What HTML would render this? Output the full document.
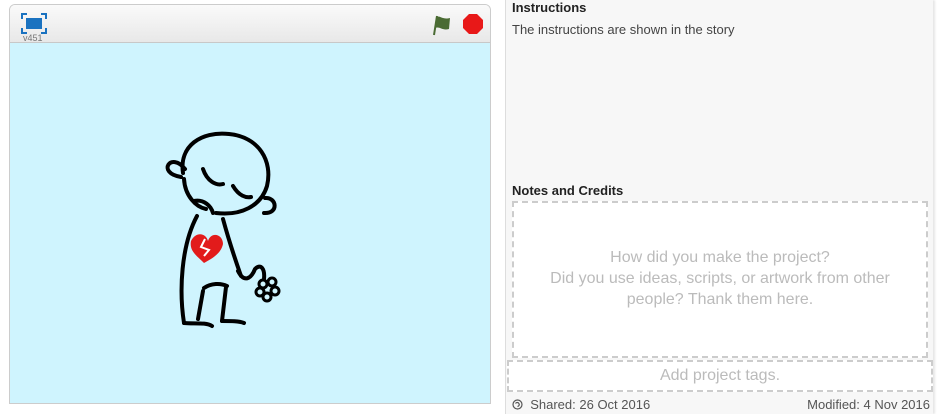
<!DOCTYPE html>
<html><head><meta charset="utf-8"><style>
*{margin:0;padding:0;box-sizing:border-box}
body{width:942px;height:414px;background:#fff;font-family:"Liberation Sans",Arial,sans-serif;position:relative;overflow:hidden}
#player{position:absolute;left:9px;top:4px;width:482px;height:400px;border:1px solid #ccc;border-radius:6px 6px 0 0;overflow:hidden}
#hdr{height:38px;background:linear-gradient(#fafafa,#e8e8e8);border-bottom:1px solid #c8c8c8;position:relative}
#stage{position:absolute;top:38px;left:0;right:0;bottom:0;background:#cff4fe}
#ver{position:absolute;left:13px;top:29px;font-size:9px;color:#777;line-height:9px}
#right{position:absolute;left:505px;top:0;width:428px;height:414px;background:#f7f7f7;border-left:1px solid #ddd;box-shadow:2px 0 2px #e6e6e6}
h3{position:absolute;left:6px;font-size:13px;font-weight:bold;color:#222}
.t{position:absolute;left:6px;top:22px;font-size:13px;color:#444}
#notes{position:absolute;left:6px;top:201px;width:416px;height:157px;background:#fff;border:2px dashed #ccc;text-align:center;color:#bbb;font-size:16px;line-height:21px;padding-top:44px}
#tags{position:absolute;left:1px;top:360px;width:426px;height:32px;background:#fff;border:2px dashed #ccc;text-align:center;color:#bbb;font-size:16px;line-height:28px}
#foot{position:absolute;left:6px;top:397px;width:418px;font-size:13px;color:#555}
</style></head><body>
<div id="player">
 <div id="hdr">
  <svg style="position:absolute;left:11px;top:8px" width="26" height="21" viewBox="0 0 26 21">
   <path d="M1 6V1H6M20 1H25V6M25 15V20H20M6 20H1V15" fill="none" stroke="#1a72c0" stroke-width="2"/>
   <rect x="5" y="5" width="16" height="11" fill="#1a72c0"/>
  </svg>
  <div id="ver">v451</div>
  <svg style="position:absolute;left:420px;top:9px" width="22" height="22" viewBox="0 0 22 22">
   <path d="M4 21L7 2" stroke="#4a6b33" stroke-width="2"/>
   <path d="M6 3C10 1 12 6 20 4L19 15C12 17 10 12 5 14Z" fill="#4a6b33"/>
  </svg>
  <svg style="position:absolute;left:452px;top:8px" width="22" height="22" viewBox="0 0 22 22">
   <polygon points="7,1 15,1 21,7 21,15 15,21 7,21 1,15 1,7" fill="#e81818"/>
  </svg>
 </div>
 <div id="stage">
  <svg width="480" height="362" viewBox="9 42 480 362" style="position:absolute;left:0;top:0">
   <g fill="none" stroke="#000" stroke-width="4" stroke-linecap="round">
    <path d="M182 172C178 145 200 130 228 133C258 136 272 160 266 185C260 205 240 215 215 212"/>
    <path d="M184 168C170 150 155 172 180 176"/>
    <path d="M183 178C184 195 195 206 205 208"/>
    <path d="M264 197C276 196 278 213 263 212"/>
    <path d="M202 168C206 180 215 185 222 183"/>
    <path d="M232 185C238 195 245 197 250 196"/>
    <path d="M193 200C203 198 210 205 212 212"/>
    <path d="M196 215C180 245 178 290 183 322"/>
    <path d="M222 218C228 240 234 258 240 275"/>
    <path d="M203 287C210 282 220 282 226 285"/>
    <path d="M202 290L197 318"/>
    <path d="M225 286L221 320"/>
    <path d="M183 322C192 323 205 321 211 325"/>
    <path d="M221 320C230 320 238 320 243 322"/>
    <path d="M237 270C243 282 250 278 254 268C260 262 264 268 263 278"/>
   </g>
   <g fill="none" stroke="#000" stroke-width="3">
    <circle cx="262" cy="283" r="4"/><circle cx="271" cy="281" r="4"/><circle cx="274" cy="290" r="4"/><circle cx="266" cy="296" r="4"/><circle cx="259" cy="291" r="4"/>
   </g>
   <path d="M190 240C195 230 205 232 207 240C210 230 222 233 222 243C220 253 210 258 203 262C196 255 188 250 190 240Z" fill="#e21b1b"/>
   <path d="M204 238L200 246L208 249L203 255" stroke="#fff" stroke-width="2" fill="none"/>
  </svg>
 </div>
</div>
<div id="right">
 <h3 style="top:0">Instructions</h3>
 <div class="t">The instructions are shown in the story</div>
 <h3 style="top:183px">Notes and Credits</h3>
 <div id="notes">How did you make the project?<br>Did you use ideas, scripts, or artwork from other<br>people? Thank them here.</div>
 <div id="tags">Add project tags.</div>
 <div id="foot"><svg width="11" height="11" viewBox="0 0 11 11" style="vertical-align:-1px"><circle cx="5.5" cy="5.5" r="4.5" fill="none" stroke="#555" stroke-width="1.2"/><path d="M3.5 4.5A2 2 0 1 1 5.5 7.5" fill="none" stroke="#555" stroke-width="1.2"/></svg><span>&nbsp; Shared: 26 Oct 2016</span><span style="float:right">Modified: 4 Nov 2016</span></div>
</div>
</body></html>
